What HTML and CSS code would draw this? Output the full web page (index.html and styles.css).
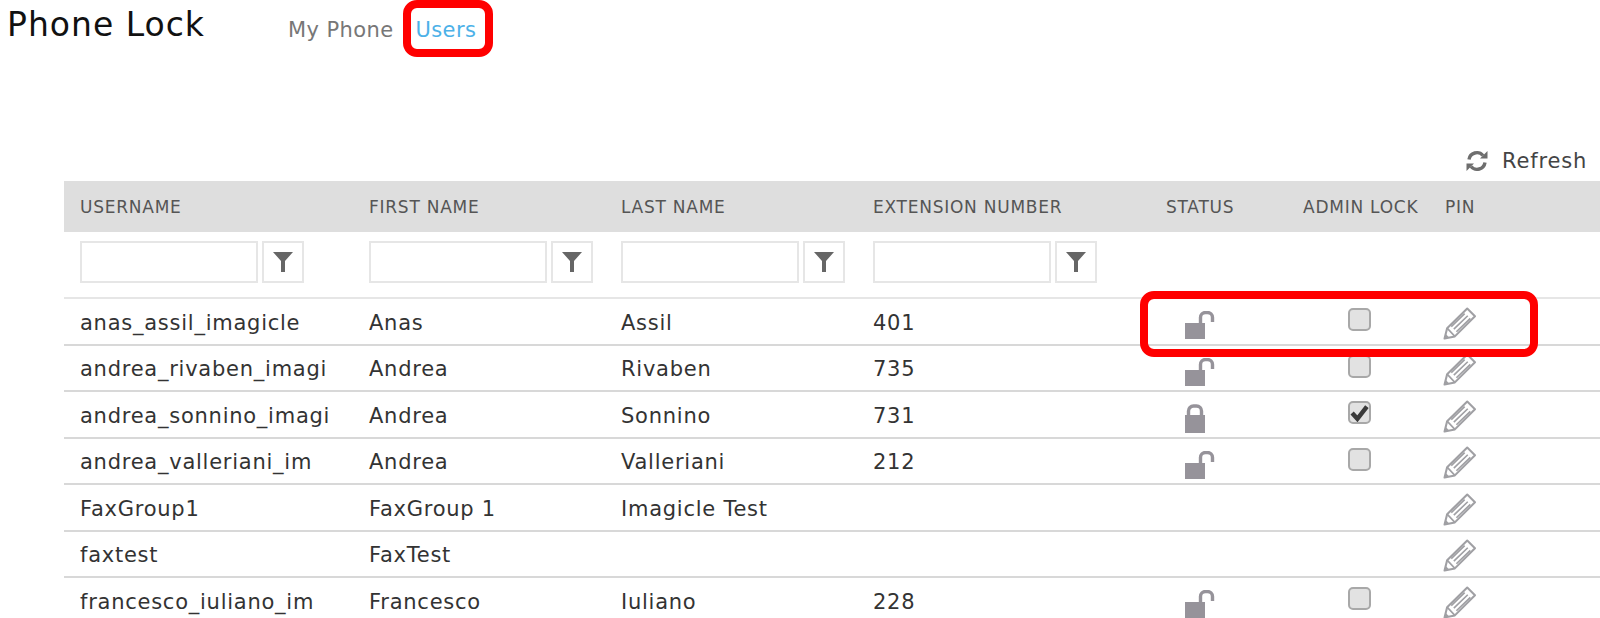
FILE: index.html
```html
<!DOCTYPE html>
<html lang="en">
<head>
    <meta charset="UTF-8">
    <title>Phone Lock</title>
    <link rel="stylesheet" href="styles.css">
</head>
<body>
<svg class="sprites" width="0" height="0">
    <symbol id="lock-open" viewBox="0 0 30 28">
        <rect x="0" y="12" width="20" height="16" fill="#96939a"/>
        <path d="M15.500 12V6.500a5 5 0 0 1 5-5h2a5 5 0 0 1 5 5V11" fill="none" stroke="#96939a" stroke-width="3.400"/>
    </symbol>
    <symbol id="lock-closed" viewBox="0 0 30 29">
        <rect x="0" y="11" width="20" height="18" fill="#96939a"/>
        <path d="M3.500 12V7a5 5 0 0 1 5-5h3a5 5 0 0 1 5 5V12" fill="none" stroke="#96939a" stroke-width="3.400"/>
    </symbol>
    <symbol id="pencil" viewBox="0 0 32 32">
        <path d="M1.500 30.500L4 20.500L23.500 1.500L31 9L11.500 28.500Z" fill="#fff" stroke="#a0a0a4" stroke-width="2" stroke-linejoin="round"/>
        <path d="M4 20.500L11.500 28.500M8 19L21 6.500M10.500 21.500L24 8.500M13 24L26.500 11" fill="none" stroke="#a0a0a4" stroke-width="1.600"/>
        <path d="M1.500 30.500L2.500 26L6 29.500Z" fill="#a0a0a4"/>
    </symbol>
    <symbol id="funnel" viewBox="0 0 20 20">
        <path d="M0 0H20L12 9V20H8V9Z" fill="#666"/>
    </symbol>
    <symbol id="tick" viewBox="0 0 18 18">
        <path d="M2 9.500L7 15L16 3.500" fill="none" stroke="#3a3a3a" stroke-width="4.200"/>
    </symbol>
</svg>

<header class="topbar">
    <h1>Phone Lock</h1>
    <nav class="topnav">
        <a href="#">My Phone</a>
        <a href="#" class="active">Users</a>
    </nav>
</header>

<div class="toolbar">
    <a href="#" class="refresh">
        <svg width="22" height="22" viewBox="0 0 22 22">
            <path d="M3 9.500A8 8 0 0 1 17 5.500" fill="none" stroke="#6e6e6e" stroke-width="3.400"/>
            <path d="M14 8.500H21.500V1Z" fill="#6e6e6e"/>
            <path d="M19 12.500A8 8 0 0 1 5 16.500" fill="none" stroke="#6e6e6e" stroke-width="3.400"/>
            <path d="M8 13.500H0.500V21Z" fill="#6e6e6e"/>
        </svg>
        Refresh
    </a>
</div>

<table class="users">
    <colgroup>
        <col class="c-user"><col class="c-first"><col class="c-last"><col class="c-ext"><col class="c-status"><col class="c-admin"><col>
    </colgroup>
    <thead>
        <tr>
            <th>USERNAME</th>
            <th>FIRST NAME</th>
            <th>LAST NAME</th>
            <th>EXTENSION NUMBER</th>
            <th>STATUS</th>
            <th>ADMIN LOCK</th>
            <th>PIN</th>
        </tr>
        <tr class="filters">
            <td><div class="filter"><input type="text"><button><svg width="20" height="20"><use href="#funnel"/></svg></button></div></td>
            <td><div class="filter"><input type="text"><button><svg width="20" height="20"><use href="#funnel"/></svg></button></div></td>
            <td><div class="filter"><input type="text"><button><svg width="20" height="20"><use href="#funnel"/></svg></button></div></td>
            <td><div class="filter"><input type="text"><button><svg width="20" height="20"><use href="#funnel"/></svg></button></div></td>
            <td></td><td></td><td></td>
        </tr>
    </thead>
    <tbody>
        <tr>
            <td>anas_assil_imagicle</td><td>Anas</td><td>Assil</td><td>401</td>
            <td class="status"><svg class="lock" width="30" height="28"><use href="#lock-open"/></svg></td>
            <td class="admin"><span class="check"></span></td>
            <td class="pin"><svg class="pen" width="33" height="33"><use href="#pencil"/></svg></td>
        </tr>
        <tr>
            <td>andrea_rivaben_imagi</td><td>Andrea</td><td>Rivaben</td><td>735</td>
            <td class="status"><svg class="lock" width="30" height="28"><use href="#lock-open"/></svg></td>
            <td class="admin"><span class="check"></span></td>
            <td class="pin"><svg class="pen" width="33" height="33"><use href="#pencil"/></svg></td>
        </tr>
        <tr>
            <td>andrea_sonnino_imagi</td><td>Andrea</td><td>Sonnino</td><td>731</td>
            <td class="status"><svg class="lock" width="30" height="29"><use href="#lock-closed"/></svg></td>
            <td class="admin"><span class="check"><svg width="19" height="19"><use href="#tick"/></svg></span></td>
            <td class="pin"><svg class="pen" width="33" height="33"><use href="#pencil"/></svg></td>
        </tr>
        <tr>
            <td>andrea_valleriani_im</td><td>Andrea</td><td>Valleriani</td><td>212</td>
            <td class="status"><svg class="lock" width="30" height="28"><use href="#lock-open"/></svg></td>
            <td class="admin"><span class="check"></span></td>
            <td class="pin"><svg class="pen" width="33" height="33"><use href="#pencil"/></svg></td>
        </tr>
        <tr>
            <td>FaxGroup1</td><td>FaxGroup 1</td><td>Imagicle Test</td><td></td>
            <td class="status"></td>
            <td class="admin"></td>
            <td class="pin"><svg class="pen" width="33" height="33"><use href="#pencil"/></svg></td>
        </tr>
        <tr>
            <td>faxtest</td><td>FaxTest</td><td></td><td></td>
            <td class="status"></td>
            <td class="admin"></td>
            <td class="pin"><svg class="pen" width="33" height="33"><use href="#pencil"/></svg></td>
        </tr>
        <tr>
            <td>francesco_iuliano_im</td><td>Francesco</td><td>Iuliano</td><td>228</td>
            <td class="status"><svg class="lock" width="30" height="28"><use href="#lock-open"/></svg></td>
            <td class="admin"><span class="check"></span></td>
            <td class="pin"><svg class="pen" width="33" height="33"><use href="#pencil"/></svg></td>
        </tr>
    </tbody>
</table>

<div class="callout callout-nav"></div>
<div class="callout callout-row"></div>
</body>
</html>
```
FILE: styles.css
```css
* {
    box-sizing: border-box;
    padding: 0;
    margin: 0;
}

html, body {
    height: 100%;
    overflow: hidden;
}

body {
    position: relative;
    background: white;
    color: #333;
    font-family: "DejaVu Sans", sans-serif;
}

.sprites {
    position: absolute;
}

.topbar {
    display: flex;
    height: 56px;
    padding-left: 7px;
}

h1 {
    font-size: 33px;
    font-weight: normal;
    letter-spacing: 1px;
    line-height: 50px;
    color: #111;
    width: 281px;
}

.topnav {
    display: flex;
    gap: 22px;
    padding-top: 17px;
    font-size: 21px;
    letter-spacing: 0.4px;
    line-height: 26px;
}

.topnav a {
    color: #777;
    text-decoration: none;
}

.topnav a.active {
    color: #4cb1e8;
}

.toolbar {
    display: flex;
    justify-content: flex-end;
    height: 125px;
    padding: 91px 13px 0 0;
}

.refresh {
    display: flex;
    align-items: center;
    gap: 14px;
    height: 28px;
    color: #444;
    font-size: 21px;
    letter-spacing: 0.8px;
    text-decoration: none;
}

.users {
    width: 1536px;
    margin-left: 64px;
    border-collapse: collapse;
    table-layout: fixed;
}

.c-user { width: 289px; }
.c-first, .c-last { width: 252px; }
.c-ext { width: 293px; }
.c-status { width: 137px; }
.c-admin { width: 142px; }

th {
    height: 51px;
    padding-left: 16px;
    background: #dedede;
    color: #555;
    font-size: 17px;
    font-weight: normal;
    letter-spacing: 0.75px;
    text-align: left;
    white-space: nowrap;
}

td {
    height: 46.500px;
    padding-left: 16px;
    padding-top: 3px;
    border-bottom: 2px solid #d8d8d8;
    font-size: 21px;
    letter-spacing: 0.75px;
    white-space: nowrap;
    overflow: hidden;
}

.filters td {
    height: 66px;
    border-bottom-color: #e6e6e6;
    vertical-align: top;
    padding-top: 9px;
}

.filter {
    display: flex;
    gap: 4px;
}

.filter input {
    width: 178px;
    height: 42px;
    border: 2px solid #e6e6e6;
}

.filter button {
    display: flex;
    align-items: center;
    justify-content: center;
    width: 42px;
    height: 42px;
    background: white;
    border: 2px solid #e6e6e6;
}

.lock, .pen {
    display: block;
}

.status {
    padding-top: 8px;
}

.status .lock {
    margin-left: 19px;
}

.admin {
    padding-top: 2px;
}

.pin {
    padding-top: 4px;
}

.pin .pen {
    margin-left: -2px;
}

.check {
    display: flex;
    align-items: center;
    justify-content: center;
    width: 23px;
    height: 23px;
    margin-left: 45px;
    margin-bottom: 5px;
    background: #e2e2e2;
    border: 2px solid #a8a8a8;
    border-radius: 5px;
}

.callout {
    position: absolute;
    border: 8px solid #f00;
    border-radius: 14px;
}

.callout-nav {
    left: 403px;
    top: 0;
    width: 90px;
    height: 57px;
}

.callout-row {
    left: 1140px;
    top: 291px;
    width: 398px;
    height: 66px;
}
```
